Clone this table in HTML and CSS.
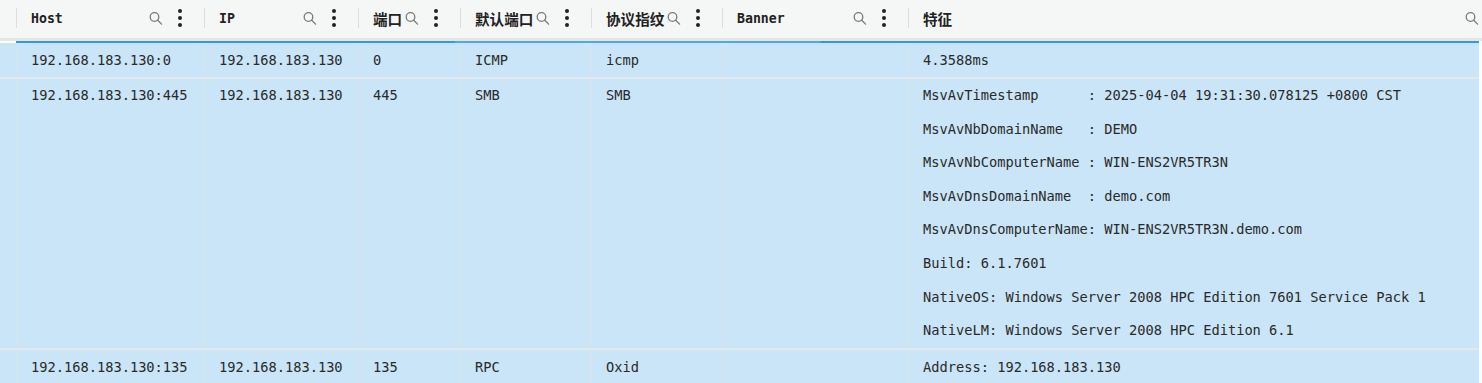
FILE: index.html
```html
<!DOCTYPE html>
<html lang="zh">
<head>
<meta charset="utf-8">
<title>Scan results</title>
<link rel="stylesheet" href="styles.css">
</head>
<body>
<div class="grid">
  <div class="head-wrap">
    <div class="head">
      <div class="hcell hcell-blank"></div>
      <div class="hcell"><span class="title">Host</span><span class="icons"><svg class="search" viewBox="0 0 16 16"><circle cx="6.5" cy="7" r="4.3"/><line x1="9.7" y1="10.2" x2="13.6" y2="14.1"/></svg><svg class="dots" viewBox="0 0 6 20"><circle cx="3" cy="3" r="2"/><circle cx="3" cy="10" r="2"/><circle cx="3" cy="17" r="2"/></svg></span></div>
      <div class="hcell"><span class="title">IP</span><span class="icons"><svg class="search" viewBox="0 0 16 16"><circle cx="6.5" cy="7" r="4.3"/><line x1="9.7" y1="10.2" x2="13.6" y2="14.1"/></svg><svg class="dots" viewBox="0 0 6 20"><circle cx="3" cy="3" r="2"/><circle cx="3" cy="10" r="2"/><circle cx="3" cy="17" r="2"/></svg></span></div>
      <div class="hcell"><span class="title cjk">端口</span><span class="icons"><svg class="search" viewBox="0 0 16 16"><circle cx="6.5" cy="7" r="4.3"/><line x1="9.7" y1="10.2" x2="13.6" y2="14.1"/></svg><svg class="dots" viewBox="0 0 6 20"><circle cx="3" cy="3" r="2"/><circle cx="3" cy="10" r="2"/><circle cx="3" cy="17" r="2"/></svg></span></div>
      <div class="hcell"><span class="title cjk">默认端口</span><span class="icons"><svg class="search" viewBox="0 0 16 16"><circle cx="6.5" cy="7" r="4.3"/><line x1="9.7" y1="10.2" x2="13.6" y2="14.1"/></svg><svg class="dots" viewBox="0 0 6 20"><circle cx="3" cy="3" r="2"/><circle cx="3" cy="10" r="2"/><circle cx="3" cy="17" r="2"/></svg></span></div>
      <div class="hcell"><span class="title cjk">协议指纹</span><span class="icons"><svg class="search" viewBox="0 0 16 16"><circle cx="6.5" cy="7" r="4.3"/><line x1="9.7" y1="10.2" x2="13.6" y2="14.1"/></svg><svg class="dots" viewBox="0 0 6 20"><circle cx="3" cy="3" r="2"/><circle cx="3" cy="10" r="2"/><circle cx="3" cy="17" r="2"/></svg></span></div>
      <div class="hcell"><span class="title">Banner</span><span class="icons"><svg class="search" viewBox="0 0 16 16"><circle cx="6.5" cy="7" r="4.3"/><line x1="9.7" y1="10.2" x2="13.6" y2="14.1"/></svg><svg class="dots" viewBox="0 0 6 20"><circle cx="3" cy="3" r="2"/><circle cx="3" cy="10" r="2"/><circle cx="3" cy="17" r="2"/></svg></span></div>
      <div class="hcell"><span class="title cjk">特征</span><span class="icons"><svg class="search" viewBox="0 0 16 16"><circle cx="6.5" cy="7" r="4.3"/><line x1="9.7" y1="10.2" x2="13.6" y2="14.1"/></svg><svg class="dots" viewBox="0 0 6 20"><circle cx="3" cy="3" r="2"/><circle cx="3" cy="10" r="2"/><circle cx="3" cy="17" r="2"/></svg></span></div>
    </div>
  </div>
  <div class="bar"></div>
  <div class="rows">
    <div class="row row-first">
      <div class="cell cell-blank"></div>
      <div class="cell">192.168.183.130:0</div>
      <div class="cell">192.168.183.130</div>
      <div class="cell">0</div>
      <div class="cell">ICMP</div>
      <div class="cell">icmp</div>
      <div class="cell"></div>
      <div class="cell">4.3588ms</div>
    </div>
    <div class="row">
      <div class="cell cell-blank"></div>
      <div class="cell">192.168.183.130:445</div>
      <div class="cell">192.168.183.130</div>
      <div class="cell">445</div>
      <div class="cell">SMB</div>
      <div class="cell">SMB</div>
      <div class="cell"></div>
      <div class="cell"><div class="line">MsvAvTimestamp      : 2025-04-04 19:31:30.078125 +0800 CST</div><div class="line">MsvAvNbDomainName   : DEMO</div><div class="line">MsvAvNbComputerName : WIN-ENS2VR5TR3N</div><div class="line">MsvAvDnsDomainName  : demo.com</div><div class="line">MsvAvDnsComputerName: WIN-ENS2VR5TR3N.demo.com</div><div class="line">Build: 6.1.7601</div><div class="line">NativeOS: Windows Server 2008 HPC Edition 7601 Service Pack 1</div><div class="line">NativeLM: Windows Server 2008 HPC Edition 6.1</div></div>
    </div>
    <div class="row row-last">
      <div class="cell cell-blank"></div>
      <div class="cell">192.168.183.130:135</div>
      <div class="cell">192.168.183.130</div>
      <div class="cell">135</div>
      <div class="cell">RPC</div>
      <div class="cell">Oxid</div>
      <div class="cell"></div>
      <div class="cell">Address: 192.168.183.130</div>
    </div>
  </div>
</div>
</body>
</html>
```

FILE: styles.css
```css
* { box-sizing: border-box; }

html, body {
  margin: 0;
  padding: 0;
  background: #ffffff;
}

body {
  font-family: "DejaVu Sans Mono", "Liberation Mono", "Noto Sans CJK SC", monospace;
  color: #2a2a2a;
  overflow: hidden;
}

.grid {
  width: 1482px;
}

.head-wrap {
  width: 1482px;
  overflow: hidden;
  background: #f5f6f6;
  border-bottom: 3px solid #e4e6e7;
}

.head {
  display: grid;
  grid-template-columns: 16px 188px 154px 102px 131px 131px 186px 612px;
  width: 1520px;
  height: 38px;
}

.hcell {
  position: relative;
  display: flex;
  align-items: center;
  padding: 0 16px 2px 15px;
  min-width: 0;
}

.hcell::before {
  content: "";
  position: absolute;
  left: 0;
  top: 8px;
  height: 20px;
  width: 1px;
  background: #dcdddd;
}

.hcell-blank::before { display: none; }

.title {
  font-family: "DejaVu Sans Mono", "Liberation Mono", monospace;
  font-weight: 700;
  font-size: 13.2px;
  color: #222;
  white-space: nowrap;
}

.title.cjk {
  font-family: "Noto Sans CJK SC", sans-serif;
  font-size: 14.6px;
  font-weight: 700;
}

.icons {
  margin-left: auto;
  display: flex;
  align-items: center;
  gap: 8px;
  flex: none;
}

.search {
  width: 16px;
  height: 16px;
  fill: none;
  stroke: #7a7a7a;
  stroke-width: 1.3;
  stroke-linecap: round;
}

.dots {
  width: 16px;
  height: 20px;
  fill: #222;
  padding: 0 5px;
}

.bar {
  height: 2px;
  margin-left: 16px;
  width: 1463px;
  background: linear-gradient(to right, #2b9cec 0, #2b9cec 30%, #4aaaf0 30%, #4aaaf0 55%, #2b9cec 55%);
}

.rows {
  width: 1479px;
}

.row {
  display: grid;
  grid-template-columns: 16px 188px 154px 102px 131px 131px 186px 1fr;
  background: #c9e5f7;
  border-bottom: 2px solid #e2e9ed;
}

.row-first .cell { line-height: 34px; }

.row-last { padding-top: 1px; }

.cell {
  border-left: 1px solid #d8e3ea;
  padding-left: 14px;
  font-size: 13.7px;
  line-height: 33.6px;
  white-space: pre;
  min-width: 0;
  overflow: hidden;
}

.cell-blank {
  border-left: none;
  padding: 0;
}

.line {
  white-space: pre;
}
```
